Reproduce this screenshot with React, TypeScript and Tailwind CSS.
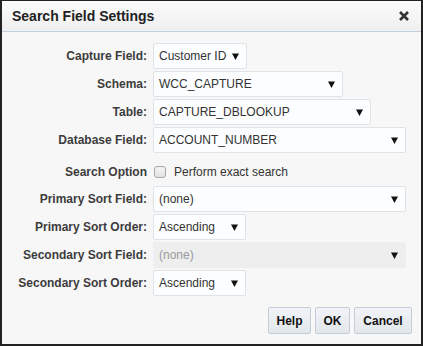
import React from "react";

const font = { fontFamily: '"Liberation Sans", Arial, sans-serif' };

function Arrow() {
  return (
    <svg width="7" height="7" viewBox="0 0 7 7" className="shrink-0">
      <path d="M0 0.5 H7 L3.5 7 Z" fill="#111" />
    </svg>
  );
}

function Select({ value, w, disabled }: { value: string; w: string; disabled?: boolean }) {
  return (
    <div
      className={`${w} h-[26px] flex items-center justify-between pl-[5px] pr-[7px] rounded-[2px] border ${
        disabled ? "bg-[#eeeeee] border-[#eeeeee] text-[#9a9a9a]" : "bg-[#fcfdfe] border-[#dfe3e6] text-[#333]"
      } text-[12px]`}
    >
      <span>{value}</span>
      <Arrow />
    </div>
  );
}

function Row({ label, children, className = "" }: { label: string; children: React.ReactNode; className?: string }) {
  return (
    <div className={`flex items-center ${className}`}>
      <div className="w-[145px] text-right text-[12px] font-bold text-[#3c3c3c]">{label}</div>
      <div className="ml-[6px]">{children}</div>
    </div>
  );
}

function Btn({ children, w }: { children: React.ReactNode; w: string }) {
  return (
    <div
      className={`${w} h-[27px] flex items-center justify-center rounded-[2px] border border-[#c5ced8] bg-gradient-to-b from-[#f1f4f7] to-[#e2e7ec] text-[12px] font-bold text-[#111]`}
    >
      {children}
    </div>
  );
}

export default function App() {
  return (
    <div style={font} className="w-[423px] h-[346px] bg-[#222] pt-[1px] pl-[2px] pr-[2px] pb-[2px]">
      <div className="w-full h-full flex flex-col bg-[#f7f7f7]">
        <div className="h-[31px] shrink-0 flex items-center justify-between pl-[10px] pr-[12px] bg-gradient-to-b from-[#fbfbfb] to-[#efefef] border-b border-[#c3cfdb]">
          <span className="text-[14px] font-bold text-[#222]">Search Field Settings</span>
          <svg width="10" height="10" viewBox="0 0 10 10">
            <path d="M1 1 L9 9 M9 1 L1 9" stroke="#333" strokeWidth="2.6" />
          </svg>
        </div>
        <div className="flex flex-col gap-[2px] pt-[11px]">
          <Row label="Capture Field:">
            <Select value="Customer ID" w="w-[94px]" />
          </Row>
          <Row label="Schema:">
            <Select value="WCC_CAPTURE" w="w-[190px]" />
          </Row>
          <Row label="Table:">
            <Select value="CAPTURE_DBLOOKUP" w="w-[218px]" />
          </Row>
          <Row label="Database Field:">
            <Select value="ACCOUNT_NUMBER" w="w-[253px]" />
          </Row>
          <Row label="Search Option" className="h-[24px] mt-[5px]">
            <div className="flex items-center">
              <div className="w-[12px] h-[12px] ml-[1px] rounded-[3px] border border-[#a8a8a8] bg-gradient-to-b from-[#f4f4f4] to-[#e2e2e2]" />
              <span className="ml-[8px] text-[12px] text-[#333]">Perform exact search</span>
            </div>
          </Row>
          <Row label="Primary Sort Field:">
            <Select value="(none)" w="w-[253px]" />
          </Row>
          <Row label="Primary Sort Order:">
            <Select value="Ascending" w="w-[93px]" />
          </Row>
          <Row label="Secondary Sort Field:">
            <Select value="(none)" w="w-[253px]" disabled />
          </Row>
          <Row label="Secondary Sort Order:">
            <Select value="Ascending" w="w-[93px]" />
          </Row>
        </div>
        <div className="flex justify-end gap-[4px] pr-[9px] mt-[11px]">
          <Btn w="w-[43px]">Help</Btn>
          <Btn w="w-[35px]">OK</Btn>
          <Btn w="w-[58px]">Cancel</Btn>
        </div>
      </div>
    </div>
  );
}
